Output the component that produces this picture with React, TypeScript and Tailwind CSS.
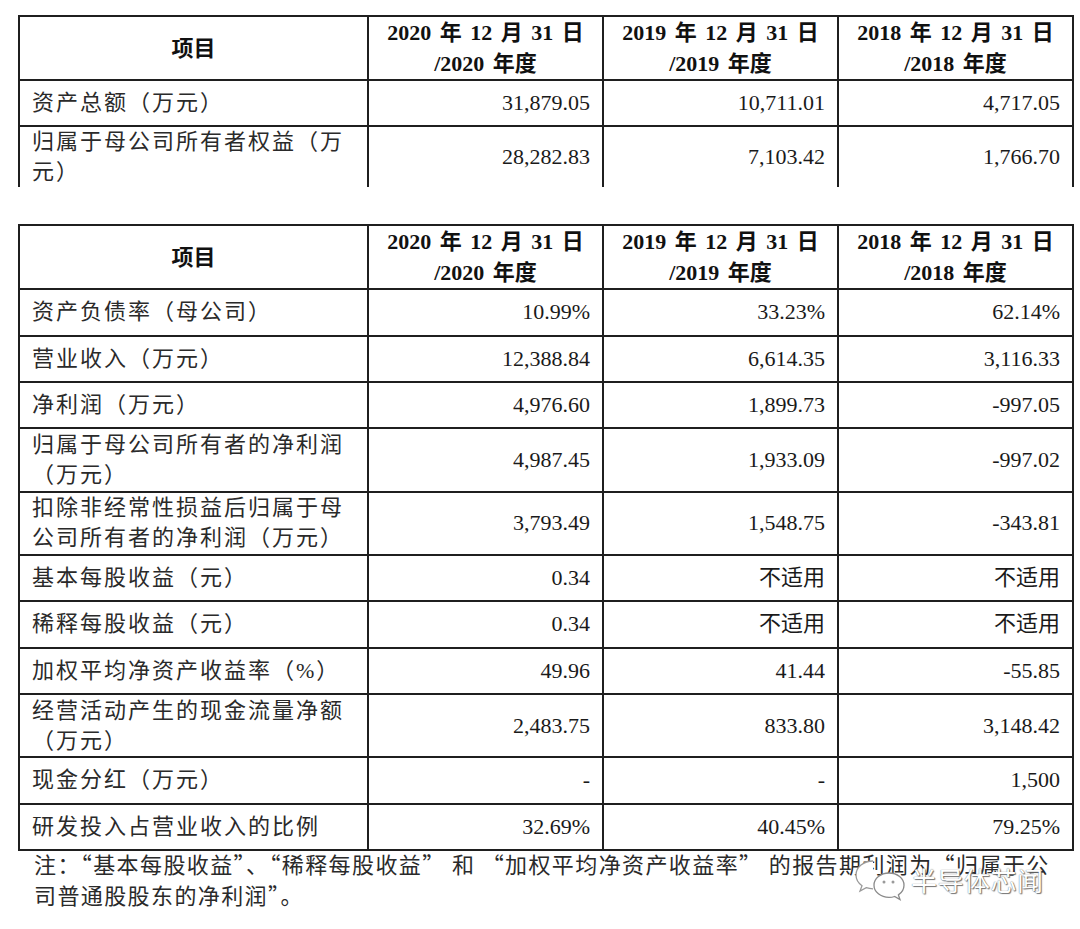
import React from "react";

const FONT = "font-['Liberation_Serif','Noto_Sans_CJK_SC',serif]";
const B = "border-2 border-[#1f1f1f]";

type Row = { label: React.ReactNode; vals: string[]; tall?: boolean };

function Header() {
  const years = ["2020", "2019", "2018"];
  return (
    <tr>
      <td className={`${B} h-[62px] text-center font-bold text-[22px] leading-[31px] text-[#111]`}>项目</td>
      {years.map((y) => (
        <td key={y} className={`${B} h-[62px] text-center font-bold text-[22px] leading-[31px] text-[#111] whitespace-nowrap [word-spacing:3px]`}>
          {y} 年 12 月 31 日
          <br />/{y} 年度
        </td>
      ))}
    </tr>
  );
}

function Cols() {
  return (
    <colgroup>
      <col className="w-[349px]" />
      <col className="w-[235px]" />
      <col className="w-[235px]" />
      <col className="w-[235px]" />
    </colgroup>
  );
}

function BodyRow({ r, last }: { r: Row; last?: boolean }) {
  const h = r.tall ? (last ? "h-[60px]" : "h-[63.5px]") : "h-[46.25px]";
  const bb = last ? "border-x-2 border-t-2 border-b-0 border-[#1f1f1f]" : B;
  return (
    <tr>
      <td className={`${bb} ${h} pl-[12px] pr-[2px] text-left text-[22px] leading-[30px] tracking-[2px] text-[#2a2a2a] whitespace-nowrap`}>
        {r.label}
      </td>
      {r.vals.map((v, i) => (
        <td key={i} className={`${bb} ${h} pr-[12px] text-right text-[22px] leading-[30px] text-[#1a1a1a] whitespace-nowrap`}>
          {v}
        </td>
      ))}
    </tr>
  );
}

const rows1: Row[] = [
  { label: "资产总额（万元）", vals: ["31,879.05", "10,711.01", "4,717.05"] },
  {
    label: (
      <>
        归属于母公司所有者权益（万
        <br />
        元）
      </>
    ),
    vals: ["28,282.83", "7,103.42", "1,766.70"],
    tall: true,
  },
];

const rows2: Row[] = [
  { label: "资产负债率（母公司）", vals: ["10.99%", "33.23%", "62.14%"] },
  { label: "营业收入（万元）", vals: ["12,388.84", "6,614.35", "3,116.33"] },
  { label: "净利润（万元）", vals: ["4,976.60", "1,899.73", "-997.05"] },
  {
    label: (
      <>
        归属于母公司所有者的净利润
        <br />
        （万元）
      </>
    ),
    vals: ["4,987.45", "1,933.09", "-997.02"],
    tall: true,
  },
  {
    label: (
      <>
        扣除非经常性损益后归属于母
        <br />
        公司所有者的净利润（万元）
      </>
    ),
    vals: ["3,793.49", "1,548.75", "-343.81"],
    tall: true,
  },
  { label: "基本每股收益（元）", vals: ["0.34", "不适用", "不适用"] },
  { label: "稀释每股收益（元）", vals: ["0.34", "不适用", "不适用"] },
  { label: "加权平均净资产收益率（%）", vals: ["49.96", "41.44", "-55.85"] },
  {
    label: (
      <>
        经营活动产生的现金流量净额
        <br />
        （万元）
      </>
    ),
    vals: ["2,483.75", "833.80", "3,148.42"],
    tall: true,
  },
  { label: "现金分红（万元）", vals: ["-", "-", "1,500"] },
  { label: "研发投入占营业收入的比例", vals: ["32.69%", "40.45%", "79.25%"] },
];

function WeChatIcon() {
  return (
    <svg width="56" height="42" viewBox="0 0 56 42" fill="none">
      <path
        d="M20 2C10.6 2 3 8.3 3 16c0 4.3 2.3 8.1 6 10.7L7 32l6.2-3.3c2.1.7 4.4 1.1 6.8 1.1"
        stroke="#9a9a9a"
        strokeWidth="1.3"
        fill="#fff"
      />
      <path
        d="M36 14c-8.3 0-15 5.4-15 12.2S27.7 38.4 36 38.4c2 0 3.9-.3 5.6-.9L47 40.5l-1.6-4.6c3.4-2.3 5.6-5.8 5.6-9.7C51 19.4 44.3 14 36 14z"
        stroke="#8a8a8a"
        strokeWidth="1.3"
        fill="#fff"
      />
      <circle cx="31" cy="23" r="1.5" fill="#9a9a9a" />
      <circle cx="40" cy="23" r="1.5" fill="#9a9a9a" />
    </svg>
  );
}

export default function App() {
  return (
    <div className={`relative w-[1080px] h-[929px] bg-white overflow-hidden pt-[15px] ${FONT}`}>
      <table className="table-fixed border-collapse w-[1054px] ml-[18px]">
        <Cols />
        <tbody>
          <Header />
          {rows1.map((r, i) => (
            <BodyRow key={i} r={r} last={i === rows1.length - 1} />
          ))}
        </tbody>
      </table>

      <table className="table-fixed border-collapse w-[1054px] ml-[18px] mt-[37px]">
        <Cols />
        <tbody>
          <Header />
          {rows2.map((r, i) => (
            <BodyRow key={i} r={r} />
          ))}
        </tbody>
      </table>

      <div className="-mt-[3px] pl-[34px] font-['Noto_Sans_CJK_SC',sans-serif] text-[22px] leading-[31px] text-[#2a2a2a] tracking-[1.4px]">
        <div className="whitespace-nowrap">
          注：“基本每股收益”、“稀释每股收益” 和 “加权平均净资产收益率” 的报告期利润为“归属于公
        </div>
        <div className="whitespace-nowrap">司普通股股东的净利润”。</div>
      </div>

      <div className="absolute left-[853px] top-[859px] flex items-center gap-[2px]">
        <WeChatIcon />
        <span className="font-['Noto_Sans_CJK_SC',sans-serif] text-[26px] leading-none tracking-[0.5px] text-white [text-shadow:0_0_1px_#555,1px_1px_1px_#777]">
          半导体芯闻
        </span>
      </div>
    </div>
  );
}
